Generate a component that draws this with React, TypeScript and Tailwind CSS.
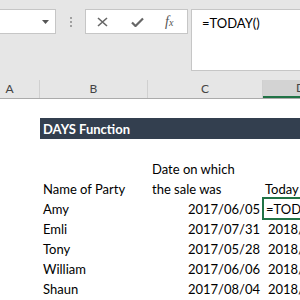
import React from "react";

const font = { fontFamily: "Lato, 'Noto Sans', sans-serif" };

function HeaderCell({ label, w, selected, pl }: { label: string; w: string; selected?: boolean; pl?: string }) {
  return (
    <div
      className={`${w} shrink-0 h-full flex items-center justify-center border-r border-[#d0d0d0] text-[12px] text-[#444] ${
        selected ? "bg-[#d3d3d3] border-b-2 border-b-[#217346]" : ""
      } ${pl ?? ""}`}
    >
      {label}
    </div>
  );
}

const rows = [
  ["Amy", "2017/06/05", "=TODAY()"],
  ["Emli", "2017/07/31", "2018/01/18"],
  ["Tony", "2017/05/28", "2018/01/18"],
  ["William", "2017/06/06", "2018/01/18"],
  ["Shaun", "2017/08/04", "2018/01/18"],
];

export default function App() {
  return (
    <div className="w-[300px] h-[300px] overflow-hidden bg-white text-black" style={font}>
      {/* Formula bar area */}
      <div className="h-[80px] bg-[#e6e6e6] flex items-start pt-[9px]">
        <div className="-ml-[10px] w-[66px] h-[25px] shrink-0 bg-white border border-[#c6c6c6] flex items-center justify-end pr-[6px]">
          <svg width="7" height="4" viewBox="0 0 7 4">
            <path d="M0 0 L7 0 L3.5 4 Z" fill="#555" />
          </svg>
        </div>
        <div className="w-[29px] h-[25px] shrink-0 flex flex-col items-center justify-center gap-[2px] pl-[1px]">
          <div className="w-[2px] h-[2px] bg-[#a0a0a0]" />
          <div className="w-[2px] h-[2px] bg-[#a0a0a0]" />
          <div className="w-[2px] h-[2px] bg-[#a0a0a0]" />
        </div>
        <div className="w-[103px] h-[25px] shrink-0 bg-white border border-[#c6c6c6] flex items-center">
          <svg className="ml-[11px]" width="11" height="10" viewBox="0 0 11 10">
            <path d="M1 1 L10 9 M10 1 L1 9" stroke="#666" strokeWidth="1.6" fill="none" />
          </svg>
          <svg className="ml-[23px]" width="13" height="10" viewBox="0 0 13 10">
            <path d="M1 5.5 L4.5 9 L12 1.5" stroke="#666" strokeWidth="2.2" fill="none" />
          </svg>
          <span
            className="ml-[21px] italic text-[14px] leading-none text-[#555]"
            style={{ fontFamily: "'Liberation Serif', serif" }}
          >
            f<span className="text-[10px]">x</span>
          </span>
        </div>
        <div className="ml-[3px] w-[130px] h-[62px] shrink-0 bg-white border border-[#c6c6c6] pl-[10px] pt-[3px] text-[13px] leading-[20px]">
          =TODAY()
        </div>
      </div>

      {/* Column headers */}
      <div className="h-[19px] bg-[#e6e6e6] border-b border-[#ababab] flex -ml-[20px]">
        <HeaderCell label="A" w="w-[60px]" />
        <HeaderCell label="B" w="w-[108px]" />
        <HeaderCell label="C" w="w-[115px]" />
        <HeaderCell label="D" w="w-[76px]" selected />
      </div>

      {/* Body */}
      <div className="grid grid-cols-[40px_108px_115px_76px] text-[13px] leading-[20px]">
        <div className="col-span-4 h-[19px]" />
        <div className="h-[21px]" />
        <div className="col-span-3 h-[21px] bg-[#333f4f] text-white font-bold flex items-center pl-[3px] text-[13px]">
          DAYS Function
        </div>

        <div className="h-[60px]" />
        <div className="h-[60px] flex items-end pl-[3px]">Name of Party</div>
        <div className="h-[60px] flex flex-col justify-end pl-[4px]">
          <div>Date on which</div>
          <div>the sale was</div>
        </div>
        <div className="h-[60px] flex items-end pl-[2px] whitespace-nowrap overflow-visible">Today</div>

        {rows.map((r, i) => (
          <React.Fragment key={r[0]}>
            <div className="h-[20px]" />
            <div className="h-[20px] pl-[3px]">{r[0]}</div>
            <div className="h-[20px] pr-[3px] text-right">{r[1]}</div>
            <div className={`h-[20px] whitespace-nowrap relative ${i === 0 ? "pl-[3px]" : "pl-[5px]"}`}>
              {i === 0 && (
                <div className="absolute -left-[1px] -top-[2px] w-[80px] h-[23px] border-2 border-[#217346]" />
              )}
              {r[2]}
            </div>
          </React.Fragment>
        ))}
      </div>
    </div>
  );
}
